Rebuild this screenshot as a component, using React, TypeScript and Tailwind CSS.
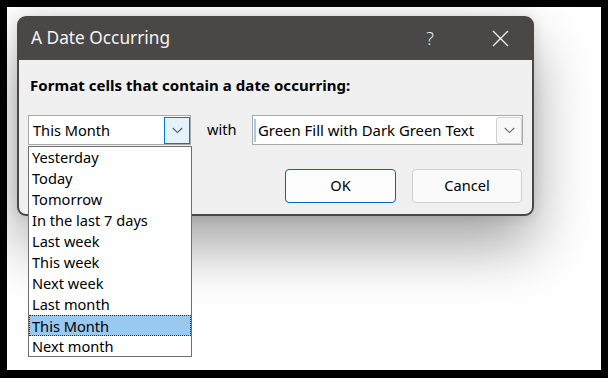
import React from "react";

const items = [
  "Yesterday",
  "Today",
  "Tomorrow",
  "In the last 7 days",
  "Last week",
  "This week",
  "Next week",
  "Last month",
  "This Month",
  "Next month",
];

function Chevron({ color = "#555" }: { color?: string }) {
  return (
    <svg width="11" height="7" viewBox="0 0 11 7">
      <path d="M0.8 1 L5.5 5.6 L10.2 1" fill="none" stroke={color} strokeWidth="1.1" />
    </svg>
  );
}

export default function App() {
  const font = { fontFamily: '"Noto Sans", "Open Sans", sans-serif' };
  return (
    <div className="w-[608px] h-[378px] bg-black pt-[7px] pl-[7px]" style={font}>
      <div className="w-[594px] h-[363px] bg-white pl-[10px] pt-[9px] overflow-hidden">
        <div className="w-[517px] h-[200px] rounded-[9px] bg-[#4a4846] flex flex-col shadow-[0_30px_60px_rgba(0,0,0,0.36),0_0_14px_rgba(0,0,0,0.12)]">
          <div className="h-[44px] flex items-center pl-[14px] pr-[25px] text-[#f3f3f3]">
            <span className="text-[17.3px] leading-none">A Date Occurring</span>
            <span className="ml-auto text-[18px] leading-none font-light mr-[58px] text-[#e8e8e8]">?</span>
            <svg width="17" height="17" viewBox="0 0 17 17">
              <path d="M1 1 L16 16 M16 1 L1 16" stroke="#f3f3f3" strokeWidth="1.4" />
            </svg>
          </div>
          <div className="flex-1 mx-[2px] mb-[2px] bg-[#f0f0f0] rounded-b-[7px] pl-[9px] pr-[9px] pt-[15px]">
            <div className="pl-[2px] h-[20px] leading-[20px] text-[15px] font-bold text-black tracking-[0.05px]">
              Format cells that contain a date occurring:
            </div>
            <div className="mt-[20px] flex items-center h-[30px]">
              <div className="relative w-[163px] h-[30px] border border-[#a9a9a9] bg-white">
                <div className="pl-[4px] leading-[28px] text-[14.6px] text-black">This Month</div>
                <div className="absolute right-0 top-[1px] w-[26px] h-[27px] border border-[#0078d4] bg-[#e5f1fb] flex items-center justify-center">
                  <Chevron />
                </div>
                <div className="absolute left-[-1px] top-[30px] w-[164px] h-[211px] border border-[#707070] bg-white z-10">
                  {items.map((it) => (
                    <div
                      key={it}
                      className={
                        it === "This Month"
                          ? "h-[21px] leading-[20px] pl-[2px] text-[14.6px] text-black bg-[#99c9ef] border border-dotted border-[#333]"
                          : "h-[21px] leading-[21px] pl-[3px] text-[14.6px] text-black"
                      }
                    >
                      {it}
                    </div>
                  ))}
                </div>
              </div>
              <div className="ml-[16px] w-[45px] text-[14.6px] text-black">with</div>
              <div className="relative w-[271px] h-[30px] border border-[#a9a9a9] bg-white flex items-center">
                <div className="ml-[1px] w-[2px] h-[23px] bg-[#9ccbee]" />
                <div className="pl-[2px] text-[14.9px] text-black leading-[28px]">
                  Green Fill with Dark Green Text
                </div>
                <div className="absolute right-0 top-[1px] w-[26px] h-[27px] border border-[#d0d0d0] rounded-[3px] bg-[#f8f8f8] flex items-center justify-center">
                  <Chevron color="#666" />
                </div>
              </div>
            </div>
            <div className="mt-[24px] flex justify-end gap-[16px] pr-[1px]">
              <div className="w-[111px] h-[34px] rounded-[4px] border border-[#0067c0] bg-[#fdfdfd] flex items-center justify-center text-[14.6px] text-black">
                OK
              </div>
              <div className="w-[110px] h-[34px] rounded-[4px] border border-[#d0d0d0] bg-[#fbfbfb] flex items-center justify-center text-[14.6px] text-black">
                Cancel
              </div>
            </div>
          </div>
        </div>
      </div>
    </div>
  );
}
